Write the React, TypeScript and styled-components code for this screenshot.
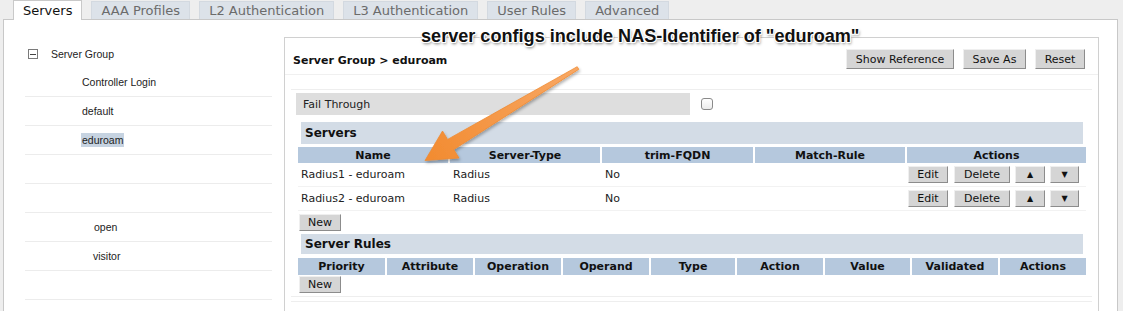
import React from "react";
import styled, { createGlobalStyle } from "styled-components";

const Global = createGlobalStyle`
  html, body { margin: 0; padding: 0; }
  body {
    background: #eeeeee;
    font-family: "DejaVu Sans", Verdana, sans-serif;
    width: 1123px;
    height: 311px;
    overflow: hidden;
  }
  * { box-sizing: border-box; }
`;

const Page = styled.div`
  position: relative;
  width: 1123px;
  height: 311px;
  overflow: hidden;
`;

const TabBar = styled.div`
  display: flex;
  align-items: flex-end;
  gap: 9px;
  padding-left: 13px;
  height: 19px;
  position: relative;
  z-index: 2;
`;

const Tab = styled.div<{ $active?: boolean }>`
  height: ${(p) => (p.$active ? 20 : 18)}px;
  margin-bottom: ${(p) => (p.$active ? -1 : 0)}px;
  padding: 0 9px;
  display: flex;
  align-items: center;
  font-size: 13px;
  color: ${(p) => (p.$active ? "#111" : "#6b6b6b")};
  background: ${(p) => (p.$active ? "#ffffff" : "#dce2e9")};
  border: 1px solid ${(p) => (p.$active ? "#c9c9c9" : "#d3d9e0")};
  border-bottom: none;
`;

const Frame = styled.div`
  margin-left: 3px;
  width: 1115px;
  height: 292px;
  background: #ffffff;
  border: 1px solid #c8c8c8;
  border-bottom: none;
  display: flex;
  align-items: flex-start;
`;

const Tree = styled.div`
  width: 280px;
  flex: none;
  padding: 20px 0 0 21px;
  font-family: "Liberation Sans", Arial, sans-serif;
  font-size: 10.5px;
  color: #222;
`;

const TreeRoot = styled.div`
  height: 28px;
  display: flex;
  align-items: center;
  gap: 13px;
  padding-left: 3px;
`;

const MinusBox = styled.span`
  width: 10px;
  height: 10px;
  border: 1px solid #7a7a7a;
  position: relative;
  display: inline-block;
  &::after {
    content: "";
    position: absolute;
    left: 1px;
    right: 1px;
    top: 3.5px;
    height: 1px;
    background: #444;
  }
`;

const TreeItem = styled.div<{ $indent?: number }>`
  width: 247px;
  height: 29px;
  border-bottom: 1px solid #ececec;
  display: flex;
  align-items: center;
  padding-left: ${(p) => p.$indent ?? 57}px;
`;

const Selected = styled.span`
  background: #c6d3e1;
  padding: 1px 1px;
  margin-left: -1px;
`;

const Panel = styled.div`
  margin-top: 17px;
  width: 815px;
  height: 275px;
  border: 1px solid #d0d0d0;
  border-bottom: none;
`;

const PanelHeader = styled.div`
  display: flex;
  align-items: center;
  padding: 11px 13px 5px 8px;
  border-bottom: 1px solid #f0f0f0;
`;

const Title = styled.div`
  font-size: 11px;
  font-weight: bold;
  color: #111;
  flex: 1;
  padding-top: 2px;
`;

const BtnGroup = styled.div<{ $gap: number }>`
  display: flex;
  gap: ${(p) => p.$gap}px;
`;

const Btn = styled.button<{ $w: number; $h?: number }>`
  width: ${(p) => p.$w}px;
  height: ${(p) => p.$h ?? 17}px;
  padding: 0;
  font-family: "DejaVu Sans", Verdana, sans-serif;
  font-size: 11px;
  color: #111;
  background: #d5d5d5;
  border: 1px solid;
  border-color: #efefef #8c8c8c #8c8c8c #efefef;
  display: flex;
  align-items: center;
  justify-content: center;
`;

const Tri = styled.span`
  font-size: 8px;
  line-height: 1;
`;

const Body = styled.div`
  margin: 14px 6px 0 6px;
  padding-left: 5px;
`;

const FailSection = styled.div`
  border-top: 1px solid #eeeeee;
  margin-left: -5px;
  padding: 3px 0 0 5px;
  display: flex;
  align-items: center;
`;

const FailBox = styled.div`
  width: 394px;
  height: 22px;
  background: #dedede;
  font-size: 11px;
  color: #222;
  display: flex;
  align-items: center;
  padding-left: 7px;
`;

const Check = styled.span`
  width: 12px;
  height: 12px;
  margin-left: 11px;
  border: 1px solid #8a8a8a;
  border-radius: 3px;
  background: linear-gradient(#ffffff, #ececec);
`;

const SectionHead = styled.div<{ $h: number; $mt: number }>`
  margin: ${(p) => p.$mt}px 0 0 5px;
  width: 782px;
  height: ${(p) => p.$h}px;
  background: #d3dce6;
  font-size: 12px;
  font-weight: bold;
  color: #111;
  display: flex;
  align-items: center;
  padding-left: 4px;
`;

const Grid = styled.div<{ $cols: string; $h: number; $head?: boolean; $mt?: number }>`
  margin: ${(p) => p.$mt ?? 0}px 0 0 2px;
  width: 788px;
  display: grid;
  grid-template-columns: ${(p) => p.$cols};
  column-gap: 2px;
  height: ${(p) => p.$h}px;
  border-bottom: ${(p) => (p.$head ? "none" : "1px solid #f2f2f2")};
`;

const HeadCell = styled.div`
  background: #b5c8dd;
  font-size: 11px;
  font-weight: bold;
  color: #111;
  display: flex;
  align-items: center;
  justify-content: center;
`;

const Cell = styled.div`
  font-size: 11px;
  color: #222;
  display: flex;
  align-items: center;
  padding-left: 3px;
`;

const ActionCell = styled.div`
  display: flex;
  align-items: center;
  padding-left: 1px;
  gap: 5px;
`;

const NewRow = styled.div<{ $mt: number }>`
  margin: ${(p) => p.$mt}px 0 0 3px;
`;

const BottomLines = styled.div`
  margin: 3px 0 0 -5px;
  border-top: 1px solid #eeeeee;
  height: 6px;
  border-bottom: 1px solid #eeeeee;
`;

const Note = styled.div`
  position: absolute;
  left: 421px;
  top: 26px;
  font-family: "Liberation Sans", Arial, sans-serif;
  font-weight: bold;
  font-size: 18.1px;
  line-height: 21px;
  color: #111;
  white-space: nowrap;
  text-shadow: 1px 0 0 #fff, -1px 0 0 #fff, 0 1px 0 #fff, 0 -1px 0 #fff,
    1px 1px 0 #fff, -1px -1px 0 #fff, 1px -1px 0 #fff, -1px 1px 0 #fff,
    1px 2px 3px rgba(0, 0, 0, 0.55);
  z-index: 5;
`;

const Overlay = styled.svg`
  position: absolute;
  left: 0;
  top: 0;
  pointer-events: none;
  z-index: 4;
`;

const serverCols = "150px 150px 151px 150px 179px";
const ruleCols = "87px 86px 86px 86px 84px 86px 85px 86px 86px";

const servers = [
  { name: "Radius1 - eduroam", type: "Radius", trim: "No", match: "" },
  { name: "Radius2 - eduroam", type: "Radius", trim: "No", match: "" },
];

const ruleHeads = ["Priority", "Attribute", "Operation", "Operand", "Type", "Action", "Value", "Validated", "Actions"];

export default function App() {
  return (
    <Page>
      <Global />
      <TabBar>
        <Tab $active>Servers</Tab>
        <Tab>AAA Profiles</Tab>
        <Tab>L2 Authentication</Tab>
        <Tab>L3 Authentication</Tab>
        <Tab>User Rules</Tab>
        <Tab>Advanced</Tab>
      </TabBar>
      <Frame>
        <Tree>
          <TreeRoot>
            <MinusBox />
            <span>Server Group</span>
          </TreeRoot>
          <TreeItem>Controller Login</TreeItem>
          <TreeItem>default</TreeItem>
          <TreeItem>
            <Selected>eduroam</Selected>
          </TreeItem>
          <TreeItem />
          <TreeItem />
          <TreeItem $indent={69}>open</TreeItem>
          <TreeItem $indent={68}>visitor</TreeItem>
          <TreeItem />
        </Tree>
        <Panel>
          <PanelHeader>
            <Title>Server Group &gt; eduroam</Title>
            <BtnGroup $gap={9}>
              <Btn $w={108} $h={20}>Show Reference</Btn>
              <Btn $w={63} $h={20}>Save As</Btn>
              <Btn $w={50} $h={20}>Reset</Btn>
            </BtnGroup>
          </PanelHeader>
          <Body>
            <FailSection>
              <FailBox>Fail Through</FailBox>
              <Check />
            </FailSection>
            <SectionHead $h={22} $mt={7}>Servers</SectionHead>
            <Grid $cols={serverCols} $h={16} $head $mt={3}>
              <HeadCell>Name</HeadCell>
              <HeadCell>Server-Type</HeadCell>
              <HeadCell>trim-FQDN</HeadCell>
              <HeadCell>Match-Rule</HeadCell>
              <HeadCell>Actions</HeadCell>
            </Grid>
            {servers.map((s) => (
              <Grid key={s.name} $cols={serverCols} $h={24}>
                <Cell>{s.name}</Cell>
                <Cell>{s.type}</Cell>
                <Cell>{s.trim}</Cell>
                <Cell>{s.match}</Cell>
                <ActionCell>
                  <Btn $w={40}>Edit</Btn>
                  <Btn $w={56} style={{ marginLeft: 1 }}>Delete</Btn>
                  <Btn $w={30}>
                    <Tri>▲</Tri>
                  </Btn>
                  <Btn $w={29}>
                    <Tri>▼</Tri>
                  </Btn>
                </ActionCell>
              </Grid>
            ))}
            <NewRow $mt={3}>
              <Btn $w={42}>New</Btn>
            </NewRow>
            <SectionHead $h={20} $mt={3}>Server Rules</SectionHead>
            <Grid $cols={ruleCols} $h={17} $head $mt={4}>
              {ruleHeads.map((h) => (
                <HeadCell key={h}>{h}</HeadCell>
              ))}
            </Grid>
            <NewRow $mt={1}>
              <Btn $w={42}>New</Btn>
            </NewRow>
            <BottomLines />
          </Body>
        </Panel>
      </Frame>
      <Note>server configs include NAS-Identifier of "eduroam"</Note>
      <Overlay width={1123} height={311} viewBox="0 0 1123 311">
        <defs>
          <linearGradient id="arrowFill" x1="578" y1="68" x2="425" y2="160" gradientUnits="userSpaceOnUse">
            <stop offset="0" stopColor="#f8a865" />
            <stop offset="1" stopColor="#f28b30" />
          </linearGradient>
          <filter id="arrowShadow" x="-20%" y="-20%" width="140%" height="140%">
            <feDropShadow dx="1" dy="2" stdDeviation="1.5" floodColor="#000" floodOpacity="0.3" />
          </filter>
        </defs>
        <path
          d="M578.8 69.3 L453.8 149.6 L459 158 L425 160.5 L442.5 131 L447.6 139.4 L577.2 66.7 Z"
          fill="url(#arrowFill)"
          stroke="#f08a30"
          strokeWidth="0.8"
          strokeLinejoin="round"
          filter="url(#arrowShadow)"
        />
      </Overlay>
    </Page>
  );
}
